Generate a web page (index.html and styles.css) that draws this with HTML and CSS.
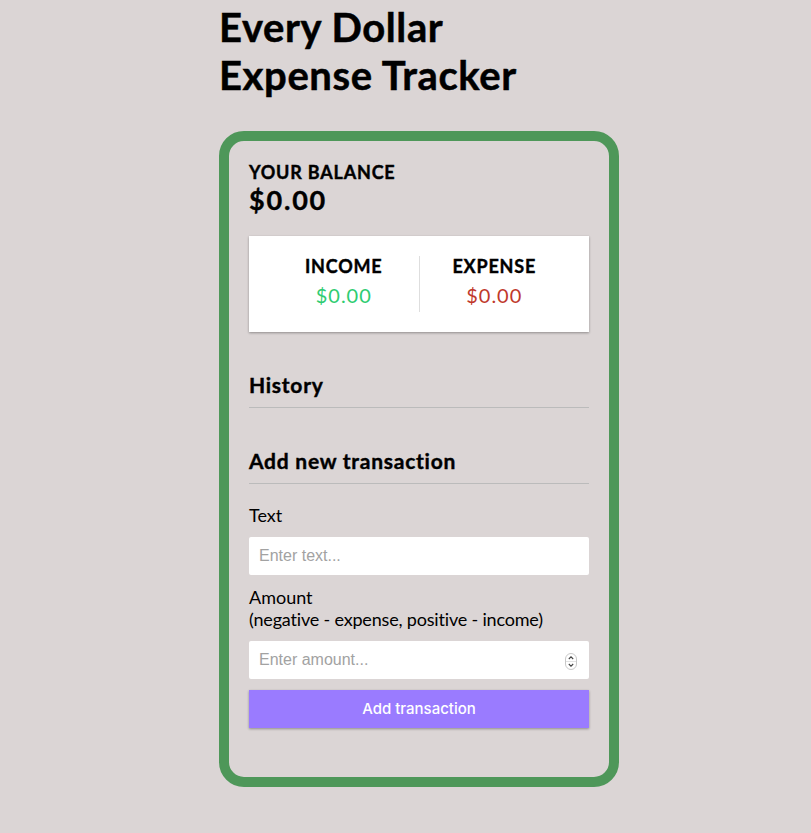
FILE: index.html
```
<!DOCTYPE html>
<html lang="en">
<head>
<meta charset="utf-8">
<title>Every Dollar Expense Tracker</title>
<link rel="stylesheet" href="styles.css">
</head>
<body>
  <div class="container">
    <h1 class="title">Every Dollar<br>Expense Tracker</h1>
    <div class="card">
      <h4 class="caps">Your Balance</h4>
      <h2 class="balance">$0.00</h2>
      <div class="inc-exp">
        <div class="col">
          <h4 class="caps">Income</h4>
          <p class="money plus">$0.00</p>
        </div>
        <div class="col">
          <h4 class="caps">Expense</h4>
          <p class="money minus">$0.00</p>
        </div>
      </div>
      <h3 class="section">History</h3>
      <ul class="list"></ul>
      <h3 class="section">Add new transaction</h3>
      <form class="form">
        <div class="form-control">
          <label class="label" for="text">Text</label>
          <input class="field" type="text" id="text" placeholder="Enter text...">
        </div>
        <div class="form-control">
          <label class="label label-amount" for="amount">Amount <br><span class="hint">(negative - expense, positive - income)</span></label>
          <div class="field-wrap">
            <input class="field number" type="number" id="amount" placeholder="Enter amount...">
            <svg class="spinner" width="12" height="17" viewBox="0 0 12 17" aria-hidden="true">
              <rect x="0.5" y="0.5" width="11" height="16" rx="5.5" fill="#fff" stroke="#c8c8c8"/>
              <line x1="1" y1="8.5" x2="11" y2="8.5" stroke="#e2e2e2"/>
              <path d="M3.8 6 L6 3.8 L8.2 6" fill="none" stroke="#444" stroke-width="1.1"/>
              <path d="M3.8 11 L6 13.2 L8.2 11" fill="none" stroke="#444" stroke-width="1.1"/>
            </svg>
          </div>
        </div>
        <button class="btn" type="button">Add transaction</button>
      </form>
    </div>
  </div>
</body>
</html>
```
FILE: styles.css
```
* {
  box-sizing: border-box;
}

body {
  margin: 0;
  background-color: #dbd5d5;
  font-family: "Lato", "Noto Sans", sans-serif;
  font-size: 18px;
  color: #000;
}

.container {
  width: 400px;
  margin: 0 0 0 219px;
  padding-top: 3px;
}

.title {
  font-size: 40px;
  line-height: 48px;
  font-weight: 700;
  letter-spacing: 0.6px;
  -webkit-text-stroke: 0.5px #000;
  margin: 0;
}

.card {
  margin-top: 32px;
  border: 10px solid #4e9759;
  border-radius: 25px;
  padding: 21px 20px 20px;
}

.caps {
  margin: 0;
  font-size: 18px;
  line-height: 1.2;
  font-weight: 700;
  letter-spacing: 0.8px;
  -webkit-text-stroke: 0.4px #000;
  text-transform: uppercase;
}

.balance {
  margin: 0;
  font-size: 27px;
  line-height: 1.2;
  letter-spacing: 1.8px;
  font-weight: 700;
  -webkit-text-stroke: 0.4px #000;
}

.inc-exp {
  background-color: #fff;
  box-shadow: 0 1px 3px rgba(0, 0, 0, 0.12), 0 1px 2px rgba(0, 0, 0, 0.24);
  padding: 20px;
  display: flex;
  margin: 20px 0;
}

.col {
  flex: 1;
  text-align: center;
}

.col:first-child {
  border-right: 1px solid #dedede;
}

.money {
  font-size: 20px;
  line-height: 1.2;
  letter-spacing: 1px;
  margin: 5px 0;
}

.plus {
  color: #2ecc71;
}

.minus {
  color: #c0392b;
}

.section {
  font-size: 21px;
  line-height: 25px;
  font-weight: 700;
  letter-spacing: 0.75px;
  -webkit-text-stroke: 0.4px #000;
  border-bottom: 1px solid #bbb;
  padding-bottom: 10px;
  margin: 40px 0 10px;
}

.list {
  list-style: none;
  padding: 0;
  margin: 0 0 40px;
}

.form {
  margin: 0;
}

.label {
  display: inline-block;
  margin: 11px 0 9px;
  line-height: 1.2;
}

.label-amount {
  margin: 12px 0 9px;
}

.hint {
  letter-spacing: -0.18px;
}

.field-wrap {
  position: relative;
}

.field {
  display: block;
  width: 100%;
  border: 0;
  border-radius: 2px;
  padding: 10px;
  margin-top: 2px;
  font-family: "Liberation Sans", Arial, sans-serif;
  font-size: 16px;
  line-height: 18px;
  height: 38px;
  background: #fff;
  color: #000;
  outline: none;
}

.field::placeholder {
  color: #a2a2a2;
}

.number {
  -moz-appearance: textfield;
}

.number::-webkit-inner-spin-button,
.number::-webkit-outer-spin-button {
  -webkit-appearance: none;
  margin: 0;
}

.spinner {
  position: absolute;
  right: 12px;
  top: 12px;
}

.btn {
  display: block;
  width: 100%;
  border: 0;
  background-color: #9a7bff;
  box-shadow: 0 1px 3px rgba(0, 0, 0, 0.12), 0 1px 2px rgba(0, 0, 0, 0.24);
  color: #fff;
  font-family: "Inter", "Liberation Sans", Arial, sans-serif;
  font-size: 15px;
  font-weight: 500;
  line-height: 18px;
  height: 38px;
  padding: 10px;
  margin: 11px 0 29px;
  cursor: pointer;
}
```
